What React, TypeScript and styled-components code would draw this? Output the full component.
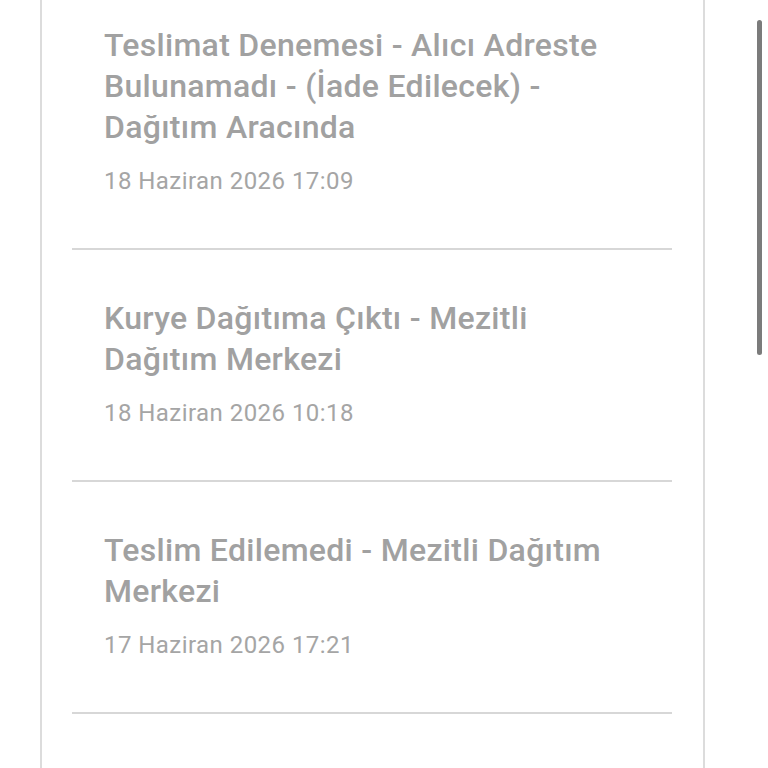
import React from 'react';
import styled, { createGlobalStyle } from 'styled-components';

interface TrackingEvent {
  title: string;
  date: string;
}

const events: TrackingEvent[] = [
  {
    title: 'Teslimat Denemesi - Alıcı Adreste Bulunamadı - (İade Edilecek) - Dağıtım Aracında',
    date: '18 Haziran 2026 17:09',
  },
  { title: 'Kurye Dağıtıma Çıktı - Mezitli Dağıtım Merkezi', date: '18 Haziran 2026 10:18' },
  { title: 'Teslim Edilemedi - Mezitli Dağıtım Merkezi', date: '17 Haziran 2026 17:21' },
  {
    title: 'Teslimat Denemesi - Alıcı Adreste Bulunamadı - Dağıtım Aracında',
    date: '17 Haziran 2026 14:02',
  },
];

const GlobalStyle = createGlobalStyle`
  html, body {
    margin: 0;
    padding: 0;
    background: #ffffff;
    overflow: hidden;
  }
  body {
    font-family: Roboto, "Noto Sans", "Liberation Sans", sans-serif;
  }
`;

const Page = styled.div`
  height: 768px;
  overflow: hidden;
`;

const Card = styled.div`
  margin-left: 40px;
  margin-top: -23px;
  width: 665px;
  box-sizing: border-box;
  border-left: 2px solid #dcdcdc;
  border-right: 2px solid #dcdcdc;
  background: #ffffff;
`;

const List = styled.ul`
  list-style: none;
  margin: 0;
  padding: 0 31px 0 30px;
`;

const Item = styled.li`
  padding: 48px 32px 52px;
  border-bottom: 2px solid #d7d7d7;
`;

const Title = styled.div`
  font-size: 32px;
  font-weight: 500;
  letter-spacing: 0.3px;
  line-height: 41px;
  color: #a1a1a1;
`;

const DateText = styled.div`
  margin-top: 18px;
  font-size: 24px;
  letter-spacing: 0.45px;
  line-height: 30px;
  color: #a5a5a5;
`;

const ScrollThumb = styled.div`
  position: fixed;
  top: 20px;
  right: 6px;
  width: 5px;
  height: 335px;
  border-radius: 3px;
  background: #7b7b7b;
`;

export default function App() {
  return (
    <Page>
      <GlobalStyle />
      <Card>
        <List>
          {events.map((e, i) => (
            <Item key={i}>
              <Title>{e.title}</Title>
              <DateText>{e.date}</DateText>
            </Item>
          ))}
        </List>
      </Card>
      <ScrollThumb />
    </Page>
  );
}
